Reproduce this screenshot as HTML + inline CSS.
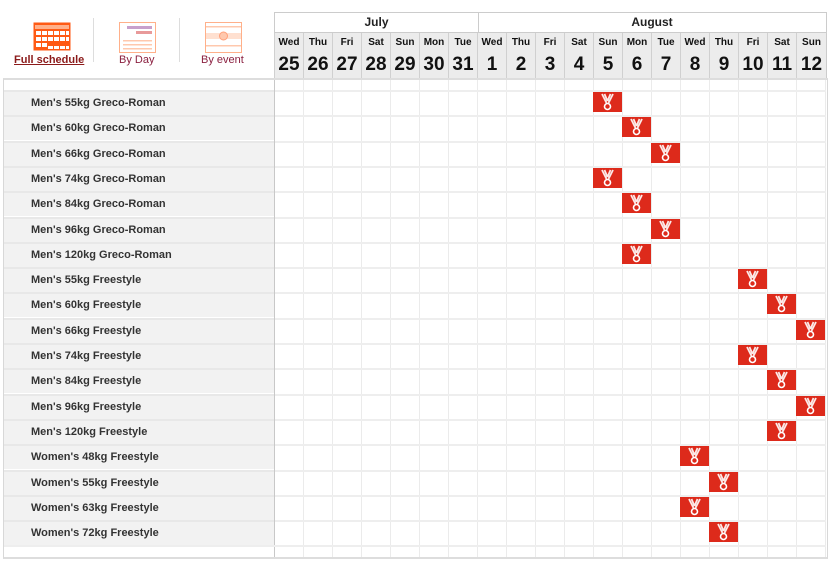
<!DOCTYPE html>
<html><head><meta charset="utf-8"><style>
*{margin:0;padding:0;box-sizing:border-box}
body{width:831px;height:565px;background:#fff;font-family:"Liberation Sans",Arial,sans-serif;position:relative;overflow:hidden}
.a{position:absolute}
.lbl{position:absolute;left:4px;width:270px;height:25px;background:#f2f2f2;border-top:2px solid #e8e8e8;font-weight:bold;font-size:11px;color:#333;padding-left:27px;line-height:23px}
.gr{position:absolute;left:275px;width:551px;height:25px;border-top:2px solid #eee}
.m{position:absolute;width:29px;height:20px;background:#dd2a1b}
.dc{position:absolute;top:33px;width:29px;height:46px;background:#ececec;border-left:1px solid #d0d0d0;text-align:center;font-weight:bold;color:#111}
.dc span{display:block;font-size:10px;margin-top:4px;height:14px}
.dc b{display:block;font-size:19px;margin-top:3px}
</style></head><body>
<svg class="a" style="left:33px;top:22px" width="38" height="29" viewBox="0 0 38 29">
<rect x="0.5" y="0.5" width="37" height="28" fill="#ff5a14"/>
<rect x="2" y="3" width="34" height="4" fill="#ffb08a"/>
<g fill="#fff">
<rect x="3" y="9" width="5" height="4"/><rect x="9" y="9" width="5" height="4"/><rect x="15" y="9" width="5" height="4"/><rect x="21" y="9" width="5" height="4"/><rect x="27" y="9" width="5" height="4"/><rect x="33" y="9" width="3" height="4"/>
<rect x="3" y="15" width="5" height="4"/><rect x="9" y="15" width="5" height="4"/><rect x="15" y="15" width="5" height="4"/><rect x="21" y="15" width="5" height="4"/><rect x="27" y="15" width="5" height="4"/><rect x="33" y="15" width="3" height="4"/>
<rect x="3" y="21" width="5" height="4"/><rect x="9" y="21" width="5" height="4"/>
<rect x="15" y="24" width="5" height="3"/><rect x="21" y="24" width="5" height="3"/><rect x="27" y="24" width="5" height="3"/><rect x="33" y="24" width="3" height="3"/>
</g></svg>
<div class="a" style="left:14px;top:54px;font-size:11px;font-weight:bold;color:#8b1a1a;text-decoration:underline">Full schedule</div>
<div class="a" style="left:93px;top:18px;width:1px;height:44px;background:#ddd"></div>
<svg class="a" style="left:119px;top:22px" width="37" height="31" viewBox="0 0 37 31">
<rect x="0.5" y="0.5" width="36" height="30" fill="#fff" stroke="#ffb08a"/>
<rect x="8" y="4" width="25" height="3" fill="#c8a0cc"/><rect x="17" y="9" width="16" height="3" fill="#e89a9a"/>
<rect x="4" y="18" width="29" height="1.5" fill="#ffc8ad"/><rect x="4" y="22" width="29" height="1.5" fill="#ffc8ad"/><rect x="4" y="26" width="29" height="1.5" fill="#ffc8ad"/>
</svg>
<div class="a" style="left:119px;top:54px;font-size:11px;color:#8b2040">By Day</div>
<div class="a" style="left:179px;top:18px;width:1px;height:44px;background:#ddd"></div>
<svg class="a" style="left:205px;top:22px" width="37" height="31" viewBox="0 0 37 31">
<rect x="0.5" y="0.5" width="36" height="30" fill="#fff" stroke="#ffb08a"/>
<rect x="1" y="4" width="35" height="1.5" fill="#ffc8ad"/><rect x="1" y="11" width="35" height="6" fill="#ffe0d0"/>
<circle cx="18.5" cy="14" r="4" fill="#ffc8ad" stroke="#ffa07a"/><rect x="1" y="23" width="35" height="1.5" fill="#ffc8ad"/>
</svg>
<div class="a" style="left:201px;top:54px;font-size:11px;color:#8b2040">By event</div>

<div class="a" style="left:274px;top:12px;width:553px;height:68px;border:1px solid #ccc;border-bottom:none"></div>
<div class="a" style="left:275px;top:15px;width:203px;text-align:center;font-weight:bold;font-size:12px;color:#222">July</div>
<div class="a" style="left:478px;top:12px;width:1px;height:21px;background:#ccc"></div>
<div class="a" style="left:478px;top:15px;width:348px;text-align:center;font-weight:bold;font-size:12px;color:#222">August</div>
<div class="a" style="left:275px;top:32px;width:551px;height:1px;background:#ccc"></div>
<div class="dc" style="left:274px"><span>Wed</span><b>25</b></div>
<div class="dc" style="left:303px"><span>Thu</span><b>26</b></div>
<div class="dc" style="left:332px"><span>Fri</span><b>27</b></div>
<div class="dc" style="left:361px"><span>Sat</span><b>28</b></div>
<div class="dc" style="left:390px"><span>Sun</span><b>29</b></div>
<div class="dc" style="left:419px"><span>Mon</span><b>30</b></div>
<div class="dc" style="left:448px"><span>Tue</span><b>31</b></div>
<div class="dc" style="left:477px"><span>Wed</span><b>1</b></div>
<div class="dc" style="left:506px"><span>Thu</span><b>2</b></div>
<div class="dc" style="left:535px"><span>Fri</span><b>3</b></div>
<div class="dc" style="left:564px"><span>Sat</span><b>4</b></div>
<div class="dc" style="left:593px"><span>Sun</span><b>5</b></div>
<div class="dc" style="left:622px"><span>Mon</span><b>6</b></div>
<div class="dc" style="left:651px"><span>Tue</span><b>7</b></div>
<div class="dc" style="left:680px"><span>Wed</span><b>8</b></div>
<div class="dc" style="left:709px"><span>Thu</span><b>9</b></div>
<div class="dc" style="left:738px"><span>Fri</span><b>10</b></div>
<div class="dc" style="left:767px"><span>Sat</span><b>11</b></div>
<div class="dc" style="left:796px;width:30px"><span>Sun</span><b>12</b></div>

<div class="a" style="left:3px;top:78px;width:825px;height:481px;border:1px solid #d8d8d8;border-top:2px solid #ddd;border-bottom:2px solid #ddd"></div>
<div class="a" style="left:275px;top:80px;width:551px;height:477px;background:repeating-linear-gradient(to right,transparent 0 28px,#ebebeb 28px 29px)"></div>
<div class="a" style="left:274px;top:80px;width:1px;height:477px;background:#c8c8c8"></div>
<div class="a" style="left:4px;top:545px;width:822px;height:2px;background:#eee"></div>

<div class="lbl" style="top:90px">Men's 55kg Greco-Roman</div><div class="gr" style="top:90px"></div>
<div class="lbl" style="top:115px">Men's 60kg Greco-Roman</div><div class="gr" style="top:115px"></div>
<div class="lbl" style="top:141px">Men's 66kg Greco-Roman</div><div class="gr" style="top:141px"></div>
<div class="lbl" style="top:166px">Men's 74kg Greco-Roman</div><div class="gr" style="top:166px"></div>
<div class="lbl" style="top:191px">Men's 84kg Greco-Roman</div><div class="gr" style="top:191px"></div>
<div class="lbl" style="top:217px">Men's 96kg Greco-Roman</div><div class="gr" style="top:217px"></div>
<div class="lbl" style="top:242px">Men's 120kg Greco-Roman</div><div class="gr" style="top:242px"></div>
<div class="lbl" style="top:267px">Men's 55kg Freestyle</div><div class="gr" style="top:267px"></div>
<div class="lbl" style="top:292px">Men's 60kg Freestyle</div><div class="gr" style="top:292px"></div>
<div class="lbl" style="top:318px">Men's 66kg Freestyle</div><div class="gr" style="top:318px"></div>
<div class="lbl" style="top:343px">Men's 74kg Freestyle</div><div class="gr" style="top:343px"></div>
<div class="lbl" style="top:368px">Men's 84kg Freestyle</div><div class="gr" style="top:368px"></div>
<div class="lbl" style="top:394px">Men's 96kg Freestyle</div><div class="gr" style="top:394px"></div>
<div class="lbl" style="top:419px">Men's 120kg Freestyle</div><div class="gr" style="top:419px"></div>
<div class="lbl" style="top:444px">Women's 48kg Freestyle</div><div class="gr" style="top:444px"></div>
<div class="lbl" style="top:470px">Women's 55kg Freestyle</div><div class="gr" style="top:470px"></div>
<div class="lbl" style="top:495px">Women's 63kg Freestyle</div><div class="gr" style="top:495px"></div>
<div class="lbl" style="top:520px;height:25px">Women's 72kg Freestyle</div><div class="gr" style="top:520px"></div>

<svg width="0" height="0" style="position:absolute"><defs><g id="md"><path d="M9 2 L13.5 11 M11.5 2 L14.5 9 M20 2 L15.5 11 M17.5 2 L14.5 9" stroke="#fff" stroke-width="1.8" fill="none" opacity=".9"/><circle cx="14.5" cy="14.5" r="3" fill="none" stroke="#fff" stroke-width="1.6"/></g></defs></svg>
<svg class="m" style="left:593px;top:92px"><use href="#md"/></svg>
<svg class="m" style="left:622px;top:117px"><use href="#md"/></svg>
<svg class="m" style="left:651px;top:143px"><use href="#md"/></svg>
<svg class="m" style="left:593px;top:168px"><use href="#md"/></svg>
<svg class="m" style="left:622px;top:193px"><use href="#md"/></svg>
<svg class="m" style="left:651px;top:219px"><use href="#md"/></svg>
<svg class="m" style="left:622px;top:244px"><use href="#md"/></svg>
<svg class="m" style="left:738px;top:269px"><use href="#md"/></svg>
<svg class="m" style="left:767px;top:294px"><use href="#md"/></svg>
<svg class="m" style="left:796px;top:320px"><use href="#md"/></svg>
<svg class="m" style="left:738px;top:345px"><use href="#md"/></svg>
<svg class="m" style="left:767px;top:370px"><use href="#md"/></svg>
<svg class="m" style="left:796px;top:396px"><use href="#md"/></svg>
<svg class="m" style="left:767px;top:421px"><use href="#md"/></svg>
<svg class="m" style="left:680px;top:446px"><use href="#md"/></svg>
<svg class="m" style="left:709px;top:472px"><use href="#md"/></svg>
<svg class="m" style="left:680px;top:497px"><use href="#md"/></svg>
<svg class="m" style="left:709px;top:522px"><use href="#md"/></svg>
</body></html>
